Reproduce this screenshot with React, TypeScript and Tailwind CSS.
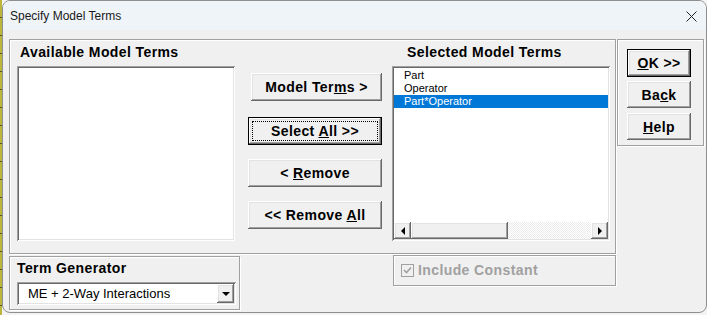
import React from 'react';

const raised =
  'shadow-[inset_-1px_-1px_0_#696969,inset_1px_1px_0_#ffffff,inset_-2px_-2px_0_#a0a0a0,inset_2px_2px_0_#e3e3e3]';
const sunken =
  'shadow-[inset_1px_1px_0_#a0a0a0,inset_-1px_-1px_0_#ffffff,inset_2px_2px_0_#696969,inset_-2px_-2px_0_#e3e3e3]';
const etched = 'border border-[#a0a0a0] shadow-[inset_1px_1px_0_#ffffff,1px_1px_0_#ffffff]';
const boldFont = "font-['Liberation_Sans',Arial,sans-serif] font-bold text-[14px] tracking-[0.4px]";
const boldLabel = `${boldFont} text-black`;

interface BtnProps {
  children: React.ReactNode;
  className?: string;
  isDefault?: boolean;
  focus?: boolean;
}

const Btn: React.FC<BtnProps> = ({ children, className = '', isDefault = false, focus = false }) => (
  <div className={`flex bg-[#f0f0f0] ${isDefault ? 'border border-black' : ''} ${className}`}>
    <div className={`flex flex-1 items-center justify-center ${raised} ${focus ? 'p-[3px]' : ''}`}>
      {focus ? (
        <div className="flex h-full w-full items-center justify-center border border-dotted border-black">
          <span className={`${boldLabel} leading-[16px]`}>{children}</span>
        </div>
      ) : (
        <span className={`${boldLabel} leading-[16px]`}>{children}</span>
      )}
    </div>
  </div>
);

const ArrowBtn: React.FC<{ dir: 'left' | 'right' | 'down'; className?: string }> = ({ dir, className = '' }) => (
  <div className={`flex items-center justify-center bg-[#f0f0f0] ${raised} ${className}`}>
    <svg width="8" height="8" viewBox="0 0 8 8">
      {dir === 'left' && <polygon points="6,0 6,8 2,4" fill="#000" />}
      {dir === 'right' && <polygon points="2,0 2,8 6,4" fill="#000" />}
      {dir === 'down' && <polygon points="0,2 8,2 4,6" fill="#000" />}
    </svg>
  </div>
);

const terms = ['Part', 'Operator', 'Part*Operator'];

export default function App() {
  return (
    <div className="flex h-[315px] w-[707px] bg-[#f3f3f3]">
      {/* sheet behind the dialog */}
      <div className="h-full w-[2px] bg-[repeating-linear-gradient(to_bottom,#bcb73c_0_17px,#55552a_17px_18px)]" />

      <div className="flex h-[313px] w-[705px] flex-col overflow-hidden rounded-[8px] border border-[#8e8e8e] bg-[#f0f0f0]">
        {/* title bar */}
        <div className="flex h-[29px] shrink-0 items-center justify-between bg-[#eff4f9] pl-[7px] pr-[9px]">
          <span className="font-['Liberation_Sans',Arial,sans-serif] text-[12px] text-[#1a1a1a]">Specify Model Terms</span>
          <svg width="11" height="11" viewBox="0 0 11 11" className="mt-[1px]">
            <path d="M0.5 0.5 L10.5 10.5 M10.5 0.5 L0.5 10.5" stroke="#222" strokeWidth="1" />
          </svg>
        </div>

        <div className="flex flex-col pl-[6px] pt-[9px]">
          {/* top row */}
          <div className="flex items-start">
            <div className={`flex h-[215px] w-[607px] pl-[7px] ${etched}`}>
              {/* available */}
              <div className="flex w-[218px] flex-col">
                <div className={`h-[26px] pl-[3px] pt-[4px] leading-[16px] ${boldLabel}`}>Available Model Terms</div>
                <div className={`h-[175px] bg-white ${sunken}`} />
              </div>

              {/* buttons */}
              <div className="ml-[13px] flex w-[134px] flex-col pt-[33px]">
                <Btn className="ml-[3px] h-[28px] w-[131px]">
                  Model Ter<u>m</u>s &gt;
                </Btn>
                <Btn isDefault focus className="mt-[16px] h-[28px]">
                  Select <u>A</u>ll &gt;&gt;
                </Btn>
                <Btn className="mt-[14px] h-[28px]">
                  &lt; <u>R</u>emove
                </Btn>
                <Btn className="mt-[14px] h-[28px]">
                  &lt;&lt; Remove <u>A</u>ll
                </Btn>
              </div>

              {/* selected */}
              <div className="ml-[10px] flex w-[218px] flex-col">
                <div className={`h-[26px] pl-[15px] pt-[4px] leading-[16px] ${boldLabel}`}>Selected Model Terms</div>
                <div className={`flex h-[175px] flex-col bg-white p-[2px] ${sunken}`}>
                  <div className="flex flex-1 flex-col pt-[1px]">
                    {terms.map((t, i) => (
                      <div
                        key={t}
                        className={`h-[13px] pl-[10px] font-['Liberation_Sans',Arial,sans-serif] text-[11px] leading-[13px] ${
                          i === 2 ? 'bg-[#0078d7] text-white' : 'text-black'
                        }`}
                      >
                        {t}
                      </div>
                    ))}
                  </div>
                  <div className="flex h-[17px]">
                    <ArrowBtn dir="left" className="w-[17px]" />
                    <div className={`w-[97px] bg-[#f0f0f0] ${raised}`} />
                    <div className="flex-1 bg-[repeating-conic-gradient(#ffffff_0_25%,#ececec_0_50%)] bg-[length:2px_2px]" />
                    <ArrowBtn dir="right" className="w-[17px]" />
                  </div>
                </div>
              </div>
            </div>

            {/* OK / Back / Help */}
            <div className={`ml-[1px] flex h-[107px] w-[87px] flex-col pl-[9px] pt-[9px] ${etched}`}>
              <Btn isDefault className="h-[28px] w-[64px]">
                <u>O</u>K &gt;&gt;
              </Btn>
              <Btn className="mt-[4px] h-[27px] w-[64px]">
                Ba<u>c</u>k
              </Btn>
              <Btn className="mt-[5px] h-[27px] w-[64px]">
                <u>H</u>elp
              </Btn>
            </div>
          </div>

          {/* bottom row */}
          <div className="mt-[1px] flex items-start">
            <div className={`mt-[1px] flex h-[54px] w-[231px] flex-col pl-[7px] ${etched}`}>
              <div className={`h-[25px] pt-[3px] leading-[16px] ${boldLabel}`}>Term Generator</div>
              <div className={`flex h-[23px] w-[219px] items-center bg-white p-[2px] ${sunken}`}>
                <span className="flex-1 pl-[9px] font-['Liberation_Sans',Arial,sans-serif] text-[13px] leading-[19px] text-black">
                  ME + 2-Way Interactions
                </span>
                <ArrowBtn dir="down" className="h-[19px] w-[17px]" />
              </div>
            </div>

            <div className={`ml-[153px] flex h-[31px] w-[223px] items-center pl-[7px] ${etched}`}>
              <div className="flex h-[13px] w-[13px] items-center justify-center border border-[#a0a0a0] bg-[#f0f0f0]">
                <svg width="9" height="9" viewBox="0 0 9 9">
                  <path d="M1 4 L3.5 6.5 L8 1.5" stroke="#a0a0a0" strokeWidth="1.6" fill="none" />
                </svg>
              </div>
              <span className={`ml-[4px] ${boldFont} text-[#a0a0a0]`}>Include Constant</span>
            </div>
          </div>
        </div>
      </div>
    </div>
  );
}
